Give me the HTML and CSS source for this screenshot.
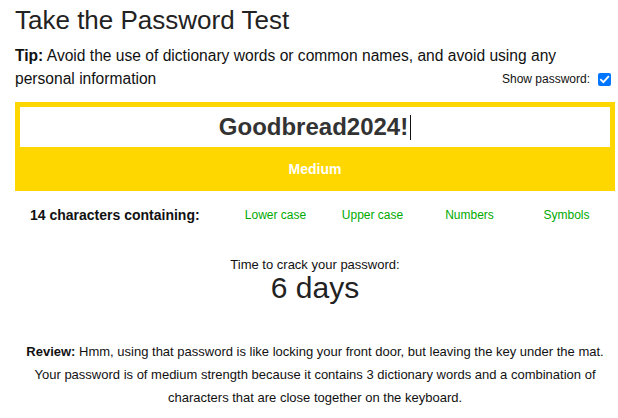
FILE: index.html
```html
<!DOCTYPE html>
<html lang="en">
<head>
<meta charset="utf-8">
<title>Take the Password Test</title>
<link rel="stylesheet" href="styles.css">
</head>
<body>
<div class="page">
  <h1 class="title">Take the Password Test</h1>
  <div class="tip-row">
    <p class="tip"><strong>Tip:</strong> Avoid the use of dictionary words or common names, and avoid using any personal information</p>
    <label class="show">Show password: <span class="checkbox"><svg viewBox="0 0 13 13" width="13" height="13"><rect x="0" y="0" width="13" height="13" rx="2" fill="#0075ff"/><path d="M3 6.8 L5.4 9.2 L10.2 3.9" fill="none" stroke="#fff" stroke-width="1.9" stroke-linecap="square"/></svg></span></label>
  </div>
  <div class="meter">
    <div class="field"><span class="pw">Goodbread2024!</span><span class="caret"></span></div>
    <div class="strength">Medium</div>
  </div>
  <div class="features">
    <div class="count">14 characters containing:</div>
    <div class="feat">Lower case</div>
    <div class="feat">Upper case</div>
    <div class="feat">Numbers</div>
    <div class="feat">Symbols</div>
  </div>
  <div class="crack">
    <div class="crack-label">Time to crack your password:</div>
    <div class="crack-time">6 days</div>
  </div>
  <p class="review"><strong>Review:</strong> Hmm, using that password is like locking your front door, but leaving the key under the mat. Your password is of medium strength because it contains 3 dictionary words and a combination of characters that are close together on the keyboard.</p>
</div>
</body>
</html>
```
FILE: styles.css
```css
* { box-sizing: border-box; }
body {
  margin: 0;
  background: #fff;
  color: #111;
  font-family: "Liberation Sans", Arial, sans-serif;
}
.page {
  padding: 3px 3px 0 15px;
  width: 618px;
}
.title {
  margin: 0;
  font-weight: normal;
  font-size: 26px;
  line-height: 34px;
  color: #222;
}
.tip-row {
  display: flex;
  align-items: flex-end;
  justify-content: space-between;
  margin-top: 7px;
  width: 600px;
}
.tip {
  margin: 0;
  font-size: 15.6px;
  line-height: 23px;
  width: 575px;
  flex: none;
  margin-right: -100px;
}
.show {
  display: flex;
  align-items: center;
  gap: 8px;
  font-size: 12px;
  line-height: 16px;
  margin-bottom: 3px;
  padding-right: 4px;
}
.checkbox { display: flex; }
.meter {
  margin-top: 12px;
  width: 600px;
  height: 89px;
  background: #ffd700;
  padding: 5px 5px 0 5px;
}
.field {
  background: #fff;
  height: 40px;
  display: flex;
  align-items: center;
  justify-content: center;
  font-weight: bold;
  font-size: 24px;
  color: #333;
}
.caret {
  display: inline-block;
  width: 1px;
  height: 25px;
  background: #111;
  margin-left: 2px;
}
.strength {
  text-align: center;
  color: #fff;
  font-weight: bold;
  font-size: 14px;
  line-height: 44px;
}
.features {
  display: grid;
  grid-template-columns: 212px 97px 97px 97px 97px;
  margin-top: 15px;
  font-size: 12px;
  line-height: 18px;
}
.count {
  font-weight: bold;
  font-size: 14px;
  padding-left: 15px;
}
.feat {
  text-align: center;
  color: #0a0;
}
.crack {
  margin-top: 33px;
  width: 600px;
  text-align: center;
}
.crack-label {
  font-size: 13px;
  line-height: 16px;
}
.crack-time {
  font-size: 30px;
  line-height: 30px;
  color: #222;
}
.review {
  margin: 37px 0 0 0;
  width: 600px;
  text-align: center;
  font-size: 13px;
  line-height: 23px;
}
```
